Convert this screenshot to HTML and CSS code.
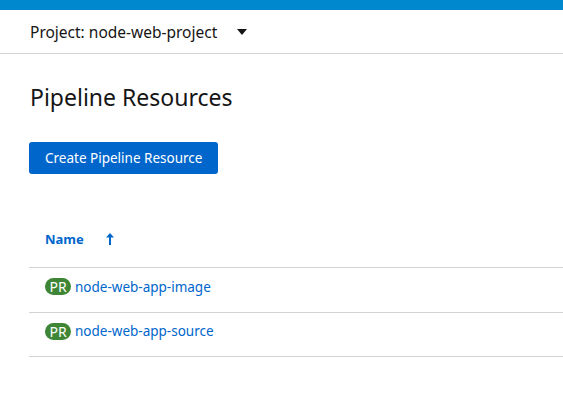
FILE: index.html
```html
<!DOCTYPE html>
<html>
<head>
<meta charset="utf-8">
<link rel="stylesheet" href="styles.css">
</head>
<body>
<div class="topbar"></div>
<div class="projectbar">
  <span class="project">Project: node-web-project</span>
  <svg class="caret" width="10" height="6" viewBox="0 0 10 6"><path d="M0 0 L10 0 L5 6 Z" fill="#151515"/></svg>
</div>
<main class="content">
  <h1 class="title">Pipeline Resources</h1>
  <button class="btn">Create Pipeline Resource</button>
  <div class="table">
    <div class="thead">
      <span class="th">Name</span>
      <svg class="sort" width="8" height="12" viewBox="0 0 8 12"><path d="M4 0 L8 4.5 L5 4.5 L5 12 L3 12 L3 4.5 L0 4.5 Z" fill="#06c"/></svg>
    </div>
    <div class="row"><span class="badge">PR</span><a class="link">node-web-app-image</a></div>
    <div class="row"><span class="badge">PR</span><a class="link">node-web-app-source</a></div>
  </div>
</main>
</body>
</html>
```
FILE: styles.css
```css
html, body { margin: 0; padding: 0; background: #fff; font-family: "Noto Sans", sans-serif; color: #151515; }
.topbar { height: 10px; background: #0088ce; }
.projectbar { border-bottom: 1px solid #d2d2d2; display: flex; align-items: center; padding-left: 30px; box-sizing: border-box; height: 44px; }
.project { font-size: 15.5px; color: #151515; }
.caret { margin-left: 20px; margin-top: 1px; }
.content { padding: 0 0 0 29px; }
.title { font-size: 23px; font-weight: 400; margin: 28px 0 0 1px; line-height: 30px; color: #151515; }
.btn { display: block; margin-top: 30px; height: 32px; padding: 0 16px; background: #06c; color: #fff; border: none; border-radius: 3px; font-family: inherit; font-size: 13.5px; }
.table { margin-top: 42px; }
.thead { height: 52px; display: flex; align-items: center; padding: 0 0 6px 16px; border-bottom: 1px solid #d2d2d2; box-sizing: border-box; }
.th { font-size: 13px; font-weight: 700; color: #06c; }
.sort { margin-left: 22px; }
.row { height: 45px; display: flex; align-items: center; padding: 0 0 7px 16px; border-bottom: 1px solid #d2d2d2; box-sizing: border-box; }
.row + .row { height: 44px; }
.badge { background: #3e8635; color: #fff; border-radius: 9px; height: 17px; width: 26px; font-size: 14px; line-height: 17px; text-align: center; margin-right: 4px; }
.link { color: #06c; font-size: 13.5px; }
```
